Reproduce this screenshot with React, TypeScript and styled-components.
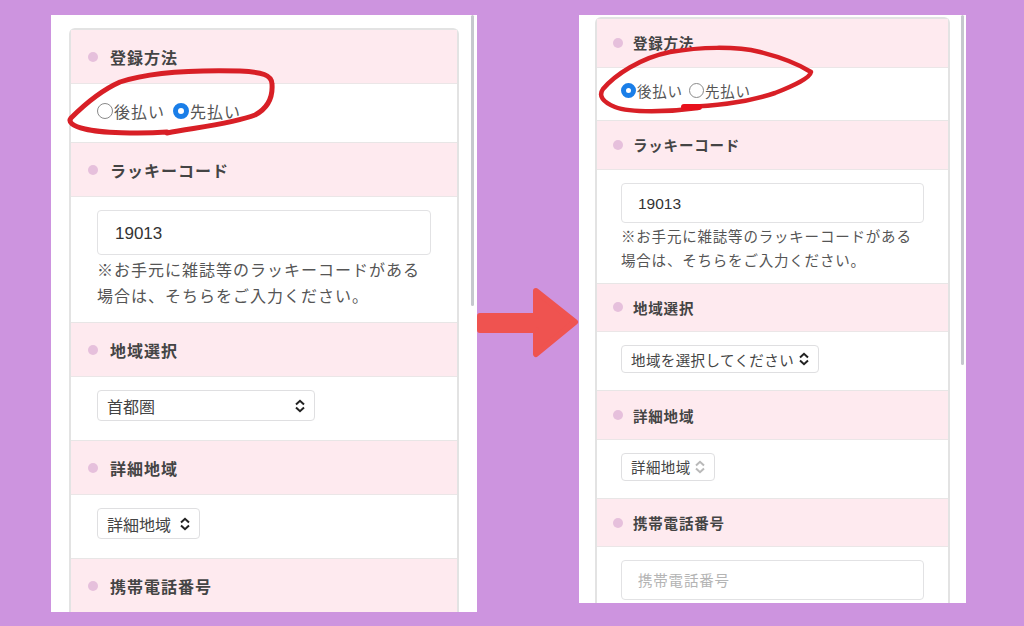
import styled, { createGlobalStyle, css } from "styled-components"

const GlobalStyle = createGlobalStyle`
  html, body {
    margin: 0;
    padding: 0;
    background: #cd94df;
  }
  body {
    font-family: "Noto Sans CJK JP", "Liberation Sans", sans-serif;
  }
`

const Page = styled.div`
  position: relative;
  width: 1024px;
  height: 626px;
  overflow: hidden;
  display: flex;
  align-items: flex-start;
  padding: 15px 0 0 51px;
  box-sizing: border-box;
  background: #cd94df;
`

const sizes = {
  large: css`
    width: 426px;
    height: 597px;
    padding: 13px 18px 0;
    --head: 54px;
    --head-pad: 17px;
    --head-gap: 12px;
    --pad: 26px;
    --radio-h: 59px;
    --radio-lift: 5px;
    --radio-gap: 8px;
    --code-h: 126px;
    --select-h: 64px;
    --radio: 16px;
    --text: 16px;
    --space: 1px;
    --box-space: 0px;
    --input-h: 45px;
    --input-size: 17px;
    --input-pad: 17px;
    --line: 26px;
    --box-h: 31px;
    --box-pad: 9px;
  `,
  small: css`
    width: 387px;
    height: 588px;
    padding: 2px 16px 0 16px;
    --head: 48.6px;
    --head-pad: 16px;
    --head-gap: 10px;
    --pad: 24px;
    --radio-h: 53.5px;
    --radio-lift: 7px;
    --radio-gap: 6px;
    --code-h: 114px;
    --select-h: 59px;
    --radio: 15px;
    --text: 14.5px;
    --space: 0.8px;
    --box-space: 0.4px;
    --input-h: 40px;
    --input-size: 15.5px;
    --input-pad: 16px;
    --line: 24px;
    --box-h: 28px;
    --box-pad: 9px;
  `,
}

const Phone = styled.div<{ $size: "large" | "small" }>`
  position: relative;
  flex: none;
  box-sizing: border-box;
  overflow: hidden;
  background: #fff;
  ${(p) => sizes[p.$size]}
`

const Scrollbar = styled.div<{ $height: number; $right: number }>`
  position: absolute;
  top: 0;
  right: ${(p) => p.$right}px;
  width: 3px;
  height: ${(p) => p.$height}px;
  border-radius: 2px;
  background: #c6c8ce;
`

const Card = styled.div`
  border: 2px solid #e3e3e3;
  border-bottom: none;
  border-radius: 6px 6px 0 0;
`

const Head = styled.div`
  box-sizing: border-box;
  height: var(--head);
  display: flex;
  align-items: center;
  gap: var(--head-gap);
  padding-left: var(--head-pad);
  background: #feeaef;
  border-bottom: 1px solid #ebe6e7;
  color: #444;
  font-size: var(--text);
  font-weight: 700;
  letter-spacing: var(--space);
`

const Dot = styled.span`
  width: 10px;
  height: 10px;
  border-radius: 50%;
  background: #e6c0dc;
`

const Body = styled.div<{ $kind: "radio" | "code" | "select" }>`
  box-sizing: border-box;
  height: var(--${(p) => p.$kind}-h);
  padding: 13px var(--pad) 0;
  background: #fff;
  border-bottom: 1px solid #e8e6e6;
  display: flex;
  flex-direction: column;
  align-items: flex-start;
  ${(p) =>
    p.$kind === "radio" &&
    css`
      justify-content: center;
      padding-top: 0;
      padding-bottom: var(--radio-lift);
    `}
`

const RadioRow = styled.div`
  display: flex;
  align-items: center;
  color: #555;
  font-size: var(--text);
  letter-spacing: var(--space);
`

const Radio = styled.input.attrs({ type: "radio", readOnly: true })`
  appearance: none;
  box-sizing: border-box;
  width: var(--radio);
  height: var(--radio);
  margin: 0 1px 0 0;
  border-radius: 50%;
  background: #fff;
  border: 1.5px solid #8a8a8a;

  &:checked {
    border: 5px solid #1a7ee8;
  }
`

const RadioLabel = styled.label`
  margin-right: var(--radio-gap);
`

const TextInput = styled.input`
  box-sizing: border-box;
  width: 100%;
  height: var(--input-h);
  flex: none;
  padding: 2px var(--input-pad) 0;
  border: 1px solid #e2e2e4;
  border-radius: 4px;
  background: #fff;
  color: #333;
  font-family: "Liberation Sans", "Noto Sans CJK JP", sans-serif;
  font-size: var(--input-size);
  outline: none;

  &::placeholder {
    color: #b4b4b4;
    font-family: "Noto Sans CJK JP", sans-serif;
    font-size: var(--text);
    letter-spacing: var(--space);
  }
`

const Hint = styled.p`
  margin: 1px 0 0;
  color: #555;
  font-size: var(--text);
  letter-spacing: var(--space);
  line-height: var(--line);
  white-space: nowrap;
`

const SelectBox = styled.div<{ $width: number; $faded?: boolean }>`
  box-sizing: border-box;
  width: ${(p) => p.$width}px;
  height: var(--box-h);
  display: flex;
  align-items: center;
  justify-content: space-between;
  padding: 0 8px 0 var(--box-pad);
  border: 1px solid #dfdfe1;
  border-radius: 4px;
  background: #fff;
  color: #444;
  font-size: var(--text);
  letter-spacing: var(--box-space);
  white-space: nowrap;

  svg {
    flex: none;
    color: ${(p) => (p.$faded ? "#b9b9b9" : "#222")};
  }
`

const Arrow = styled.svg`
  flex: none;
  width: 102px;
  height: 70px;
  margin-top: 273px;
  color: #ef5350;
`

const InkLayer = styled.svg`
  position: absolute;
  inset: 0;
  width: 1024px;
  height: 626px;
  pointer-events: none;
`

const Chevrons = () => (
  <svg width="12" height="14" viewBox="0 0 12 14" fill="none" stroke="currentColor" strokeWidth="2">
    <path d="M2 5.5 6 1.8l4 3.7M2 8.5l4 3.7 4-3.7" />
  </svg>
)

type FormProps = {
  first: boolean
  region: string
  regionWidth: number
  detailWidth: number
  detailFaded?: boolean
  phoneInput?: boolean
}

const Form = ({ first, region, regionWidth, detailWidth, detailFaded, phoneInput }: FormProps) => (
  <Card>
    <Head><Dot />登録方法</Head>
    <Body $kind="radio">
      <RadioRow>
        <Radio name={region} checked={first} />
        <RadioLabel>後払い</RadioLabel>
        <Radio name={region} checked={!first} />
        <RadioLabel>先払い</RadioLabel>
      </RadioRow>
    </Body>
    <Head><Dot />ラッキーコード</Head>
    <Body $kind="code">
      <TextInput readOnly value="19013" />
      <Hint>※お手元に雑誌等のラッキーコードがある<br />場合は、そちらをご入力ください。</Hint>
    </Body>
    <Head><Dot />地域選択</Head>
    <Body $kind="select">
      <SelectBox $width={regionWidth}>{region}<Chevrons /></SelectBox>
    </Body>
    <Head><Dot />詳細地域</Head>
    <Body $kind="select">
      <SelectBox $width={detailWidth} $faded={detailFaded}>詳細地域<Chevrons /></SelectBox>
    </Body>
    <Head><Dot />携帯電話番号</Head>
    {phoneInput && (
      <Body $kind="code">
        <TextInput readOnly placeholder="携帯電話番号" />
      </Body>
    )}
  </Card>
)

export default function App() {
  return (
    <>
      <GlobalStyle />
      <Page>
        <Phone $size="large">
          <Form first={false} region="首都圏" regionWidth={218} detailWidth={103} />
          <Scrollbar $height={291} $right={3} />
        </Phone>
        <Arrow viewBox="0 0 102 70">
          <path
            d="M3 28H59V3L98 34 59 66V42H3Z"
            fill="currentColor"
            stroke="currentColor"
            strokeWidth="6"
            strokeLinejoin="round"
          />
        </Arrow>
        <Phone $size="small">
          <Form first region="地域を選択してください" regionWidth={198} detailWidth={94} detailFaded phoneInput />
          <Scrollbar $height={350} $right={2} />
        </Phone>
        <InkLayer viewBox="0 0 1024 626" fill="none" stroke="#d81f26" strokeWidth="4.5" strokeLinecap="round" strokeLinejoin="round">
          <path strokeWidth="5" d="M167 132C140 134 100 133 85 129 72 126 68 122 71 118 85 104 102 90 120 82 150 72 200 70 240 71 262 72 272 75 272 84 273 98 268 108 255 115 235 123 200 127 167 133" />
          <path d="M698 108C670 112 630 113 615 107 603 102 598 96 603 89 615 75 640 58 670 52 700 47 735 46 760 52 780 57 800 65 811 72 810 78 795 85 775 93 745 103 715 106 685 107" />
          <path d="M684 107H699" strokeWidth="6" stroke="#e8101c" />
        </InkLayer>
      </Page>
    </>
  )
}
